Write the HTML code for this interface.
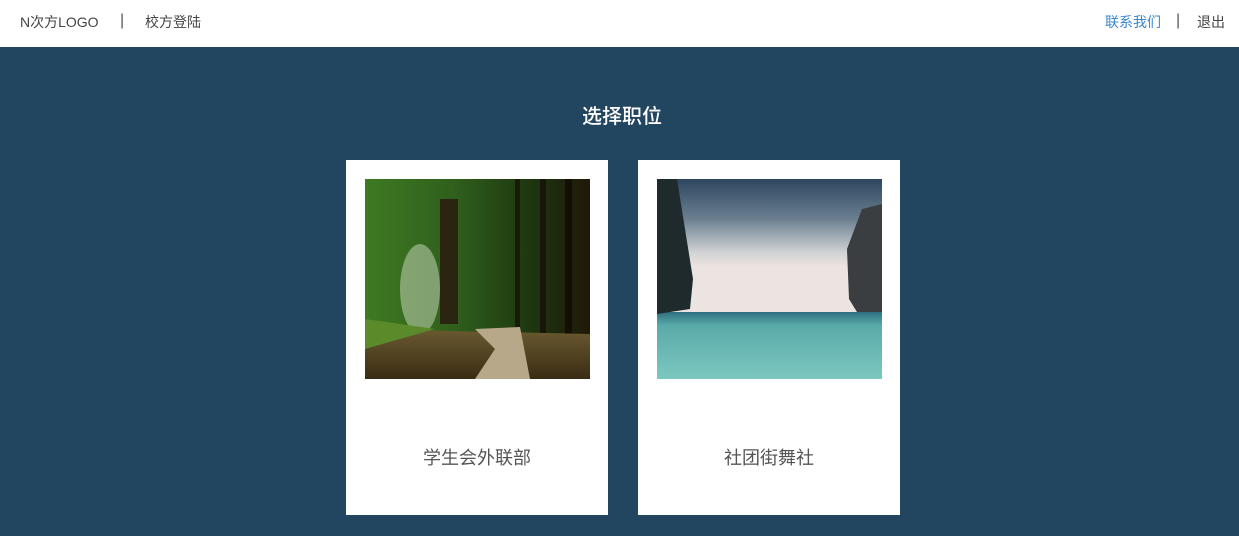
<!DOCTYPE html>
<html><head><meta charset="utf-8"><style>
*{margin:0;padding:0;box-sizing:border-box}
body{width:1239px;height:536px;background:#224560;font-family:"Liberation Sans","Noto Sans CJK SC",sans-serif;overflow:hidden;position:relative}
.hdr{position:absolute;left:0;top:0;width:1239px;height:47px;background:#fff;font-size:14px;color:#444}
.hdr span{position:absolute;top:13px;line-height:18px}
h1{position:absolute;top:104px;left:0;width:1244px;text-align:center;color:#fff;font-size:20px;font-weight:500;line-height:26px}
.card{position:absolute;top:160px;width:262px;height:355px;background:#fff}
.card svg{position:absolute;left:19px;top:19px}
.card p{position:absolute;top:284px;width:100%;text-align:center;font-size:18px;color:#555}
</style></head><body>
<div class="hdr">
<span style="left:20px">N次方LOGO</span>
<span style="left:120px;color:#555;font-size:16px;top:12px">|</span>
<span style="left:145px">校方登陆</span>
<span style="left:1105px;color:#3a86d0">联系我们</span>
<span style="left:1176px;color:#555;font-size:16px;top:12px">|</span>
<span style="left:1197px">退出</span>
</div>
<h1>选择职位</h1>
<div class="card" style="left:346px">
<svg width="225" height="200"><defs>
<linearGradient id="f" x1="0" y1="0" x2="1" y2="0"><stop offset="0" stop-color="#3d7a22"/><stop offset=".4" stop-color="#2f5f1c"/><stop offset=".75" stop-color="#1d3510"/><stop offset="1" stop-color="#201808"/></linearGradient>
<linearGradient id="g" x1="0" y1="0" x2="0" y2="1"><stop offset="0" stop-color="#6a5a30"/><stop offset="1" stop-color="#3a2c14"/></linearGradient></defs>
<rect width="225" height="200" fill="url(#f)"/>
<ellipse cx="55" cy="110" rx="20" ry="45" fill="#b8c8a8" opacity=".6"/>
<rect x="75" y="20" width="18" height="125" fill="#2b2410"/>
<rect x="150" y="0" width="5" height="160" fill="#1a1a0a"/><rect x="175" y="0" width="6" height="170" fill="#1a140a"/><rect x="200" y="0" width="7" height="180" fill="#140e05"/>
<path d="M0 150 L225 155 L225 200 L0 200Z" fill="url(#g)"/>
<path d="M110 150 L155 148 L165 200 L110 200 L130 170Z" fill="#b8a88a"/>
<path d="M0 140 L70 150 L0 170Z" fill="#5a8a2a"/>
</svg>
<p>学生会外联部</p></div>
<div class="card" style="left:638px">
<svg width="225" height="200"><defs>
<linearGradient id="s" x1="0" y1="0" x2="0" y2="1"><stop offset="0" stop-color="#2d4660"/><stop offset=".3" stop-color="#6b7f90"/><stop offset=".55" stop-color="#d0d2d4"/><stop offset=".66" stop-color="#ece4e0"/></linearGradient>
<linearGradient id="w" x1="0" y1="0" x2="0" y2="1"><stop offset="0" stop-color="#2f6f80"/><stop offset=".2" stop-color="#5aaaaa"/><stop offset="1" stop-color="#7cc8c0"/></linearGradient></defs>
<rect width="225" height="133" fill="url(#s)"/>
<rect y="133" width="225" height="67" fill="url(#w)"/>
<path d="M0 0 L20 0 L28 50 L36 100 L33 130 L0 135Z" fill="#1e2a2c"/>
<path d="M225 25 L205 30 L190 70 L192 120 L200 133 L225 133Z" fill="#3a3e40"/>
</svg>
<p>社团街舞社</p></div>
</body></html>
